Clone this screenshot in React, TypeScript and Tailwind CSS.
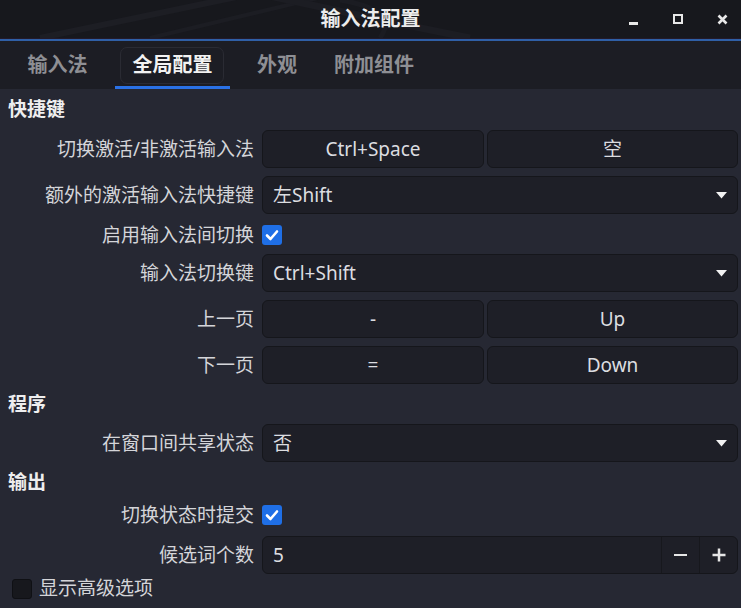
import React, { useState } from "react";

const font = { fontFamily: '"Noto Sans", "Noto Sans CJK SC", sans-serif' };

const Check = ({ on }: { on: boolean }) =>
  on ? (
    <div className="flex h-[20px] w-[20px] items-center justify-center rounded-[3px] bg-[#1f6fe6]">
      <svg width="14" height="12" viewBox="0 0 14 12">
        <path d="M2 6.5 L5.5 10 L12 2.5" fill="none" stroke="#ffffff" strokeWidth="2.6" strokeLinecap="round" strokeLinejoin="round" />
      </svg>
    </div>
  ) : (
    <div className="h-[20px] w-[20px] rounded-[3px] border border-[#0f1014] bg-[#17181d]" />
  );

const Arrow = () => (
  <svg width="11" height="7" viewBox="0 0 11 7" className="mr-[10px]">
    <path d="M0 0 H11 L5.5 6.5 Z" fill="#f2f2f2" />
  </svg>
);

const Label = ({ children }: { children: React.ReactNode }) => (
  <div className="w-[254px] shrink-0 text-right text-[#d4d5d9]">{children}</div>
);

const Btn = ({ children, w }: { children: React.ReactNode; w: string }) => (
  <div
    className={`flex h-full items-center justify-center rounded-[6px] border border-[#15161b] bg-[#1e1f27] text-[#dcdde0] ${w}`}
  >
    {children}
  </div>
);

const Combo = ({ value }: { value: string }) => (
  <div className="flex h-full flex-1 items-center justify-between rounded-[6px] border border-[#15161b] bg-[#1e1f27] pl-[10px] text-[#dcdde0]">
    <span>{value}</span>
    <Arrow />
  </div>
);

const Row = ({ label, children, h = "h-[38px]", mb = "mb-[8px]" }: { label: string; children: React.ReactNode; h?: string; mb?: string }) => (
  <div className={`flex items-center gap-[8px] pr-[3px] ${h} ${mb}`}>
    <Label>{label}</Label>
    <div className="flex h-full flex-1 items-center gap-[3px]">{children}</div>
  </div>
);

const Heading = ({ children, h }: { children: React.ReactNode; h: string }) => (
  <div className={`flex items-center pl-[8px] font-bold text-[#eeeeef] ${h}`}>{children}</div>
);

export default function App() {
  const [tab] = useState(1);
  // 各タブの幅（中心位置を合わせる）
  const tabs = [
    { t: "输入法", w: "w-[115px]" },
    { t: "全局配置", w: "w-[115px]" },
    { t: "外观", w: "w-[94px]" },
    { t: "附加组件", w: "w-[100px]" },
  ];

  return (
    <div className="min-h-[608px] w-[741px] overflow-hidden bg-[#262833] text-[19px]" style={font}>
      {/* title bar */}
      <div className="relative flex h-[38px] items-center justify-center overflow-hidden bg-[#17181d]">
        <svg className="absolute left-0 top-0" width="741" height="38" viewBox="0 0 741 38">
          <path d="M40 38 L270 -10" stroke="#1d1e24" strokeWidth="6" fill="none" />
          <path d="M150 38 L330 -5" stroke="#1c1d23" strokeWidth="4" fill="none" />
          <path d="M265 -5 Q380 20 470 38" stroke="#1c1d23" strokeWidth="7" fill="none" />
          <path d="M340 0 Q400 10 380 38" stroke="#1b1c22" strokeWidth="5" fill="none" />
        </svg>
        <span className="relative text-[20px] font-bold text-[#ececec]">输入法配置</span>
        <div className="absolute right-0 top-0 flex h-full items-center text-[#e8e8e8]">
          <div className="flex w-[40px] items-center justify-center">
            <div className="mt-[8px] h-[3px] w-[9px] bg-[#e8e8e8]" />
          </div>
          <div className="flex w-[50px] items-center justify-center">
            <div className="h-[10px] w-[10px] border-[2.5px] border-[#e8e8e8]" />
          </div>
          <div className="flex w-[38px] items-center justify-center">
            <svg width="11" height="11" viewBox="0 0 11 11">
              <path d="M1.5 1.5 L9.5 9.5 M9.5 1.5 L1.5 9.5" stroke="#e8e8e8" strokeWidth="2.6" />
            </svg>
          </div>
        </div>
      </div>
      <div className="h-px bg-[#221a2a]" />
      <div className="h-[2px] bg-[#2f5fa6]" />

      {/* tabs */}
      <div className="flex h-[48px] items-stretch bg-[#1c1d24]">
        {tabs.map((x, i) => (
          <div key={x.t} className={`relative flex items-center justify-center ${x.w}`}>
            {i === tab && (
              <div className="absolute left-[5px] right-[6px] top-[6px] bottom-[5px] rounded-[7px] border border-[#2a2b33]" />
            )}
            <span className={`relative text-[20px] font-bold ${i === tab ? "text-[#f2f2f2]" : "text-[#8e8f94]"}`}>{x.t}</span>
            {i === tab && <div className="absolute bottom-0 left-0 right-0 h-[3px] bg-[#2a71e6]" />}
          </div>
        ))}
      </div>

      {/* content */}
      <div className="flex flex-col">
        <Heading h="h-[41px]">快捷键</Heading>
        <Row label="切换激活/非激活输入法">
          <Btn w="w-[222px]">Ctrl+Space</Btn>
          <Btn w="flex-1">空</Btn>
        </Row>
        <Row label="额外的激活输入法快捷键">
          <Combo value="左Shift" />
        </Row>
        <Row label="启用输入法间切换" h="h-[26px]" mb="mb-[6px]">
          <Check on />
        </Row>
        <Row label="输入法切换键">
          <Combo value="Ctrl+Shift" />
        </Row>
        <Row label="上一页">
          <Btn w="w-[222px]">-</Btn>
          <Btn w="flex-1">Up</Btn>
        </Row>
        <Row label="下一页" mb="mb-0">
          <Btn w="w-[222px]">=</Btn>
          <Btn w="flex-1">Down</Btn>
        </Row>

        <Heading h="h-[40px]">程序</Heading>
        <Row label="在窗口间共享状态" mb="mb-0">
          <Combo value="否" />
        </Row>

        <Heading h="h-[40px]">输出</Heading>
        <Row label="切换状态时提交" h="h-[26px]">
          <Check on />
        </Row>
        <Row label="候选词个数" mb="mb-0">
          <div className="flex h-full flex-1 items-stretch rounded-[6px] border border-[#15161b] bg-[#1e1f27] text-[#dcdde0]">
            <div className="flex flex-1 items-center pl-[10px]">5</div>
            <div className="flex w-[38px] items-center justify-center border-l border-[#17181d]">
              <div className="h-[2.5px] w-[13px] bg-[#e6e6e6]" />
            </div>
            <div className="flex w-[38px] items-center justify-center border-l border-[#17181d]">
              <svg width="14" height="14" viewBox="0 0 14 14">
                <path d="M7 0.5 V13.5 M0.5 7 H13.5" stroke="#e6e6e6" strokeWidth="2.5" />
              </svg>
            </div>
          </div>
        </Row>
        <div className="flex h-[29px] items-center gap-[7px] pl-[12px] text-[#d4d5d9]">
          <Check on={false} />
          <span>显示高级选项</span>
        </div>
      </div>
    </div>
  );
}
